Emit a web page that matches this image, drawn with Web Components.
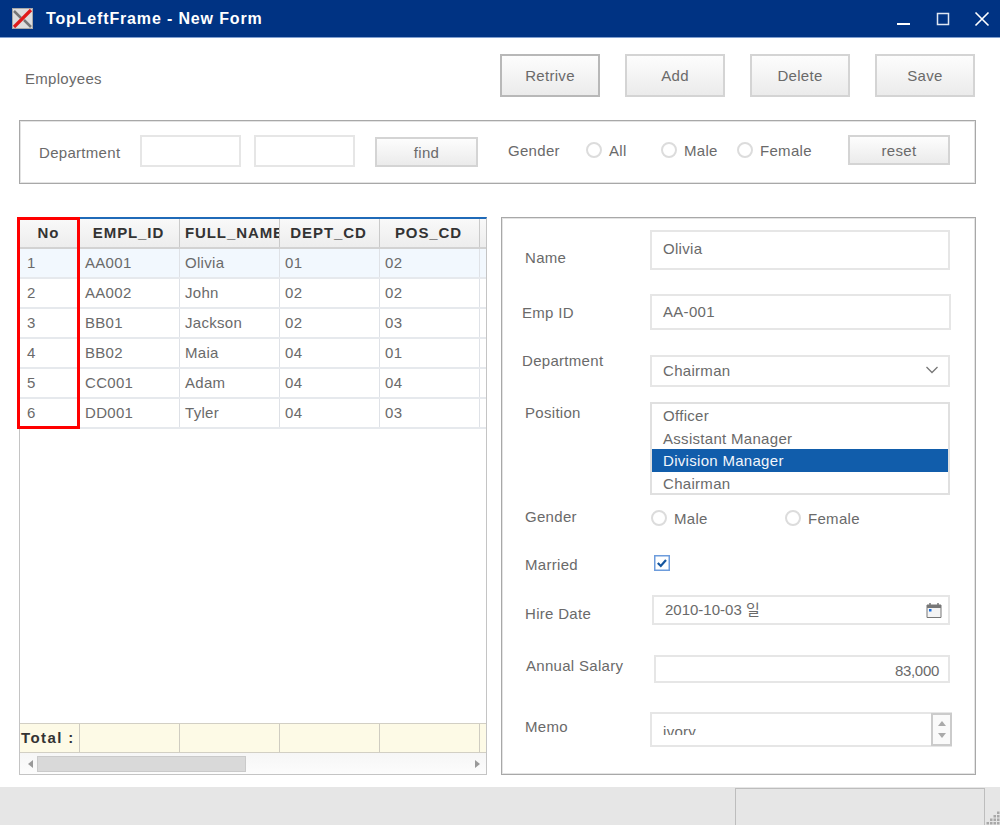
<!DOCTYPE html>
<html lang="en">
<head>
<meta charset="utf-8">
<title>TopLeftFrame - New Form</title>
<style>
  html, body { margin: 0; height: 825px; overflow: hidden; background: #fff; }
  body { font: 15px/1 "Liberation Sans", "Noto Sans CJK KR", sans-serif; letter-spacing: .3px; color: #6a6a6a; }
</style>
</head>
<body>
<app-frame></app-frame>

<script>
/**
 * Title bar with the window icon and the three window buttons
 */
class WinTitlebar extends HTMLElement {
  constructor() {
    super();
    this.attachShadow({ mode: "open" }).innerHTML = `
<style>
  :host { display: flex; align-items: center; height: 37px; background: #003383; border-bottom: 1px solid #7f9fd0; color: #fff; }
  .logo { margin-left: 12px; }
  .title { margin-left: 13px; font-size: 16px; font-weight: bold; letter-spacing: .85px; flex: 1; padding-top: 1px; }
  svg.btn { margin-left: 23px; }
  svg.btn:last-child { margin-right: 10px; }
</style>
<svg class="logo" width="21" height="21" viewBox="0 0 21 21">
  <rect x=".5" y=".5" width="20" height="20" fill="#dedede" stroke="#a8a8a8"/>
  <path d="M2 3l7 7M12 12l7 7" stroke="#767676" stroke-width="2.500"/>
  <path d="M2 19L19 2" stroke="#e01b1b" stroke-width="3.200"/>
</svg>
<span class="title"><slot></slot></span>
<svg class="btn" width="16" height="16" viewBox="0 0 16 16"><path d="M1 13h13" stroke="#fff" stroke-width="2"/></svg>
<svg class="btn" width="16" height="16" viewBox="0 0 16 16"><rect x="2.500" y="2.500" width="11" height="11" fill="none" stroke="#dfe6f2" stroke-width="1.500"/></svg>
<svg class="btn" width="16" height="16" viewBox="0 0 16 16"><path d="M1.500 1.500l13 13M14.500 1.500l-13 13" stroke="#fff" stroke-width="1.600"/></svg>`;
  }
}

/**
 * Grey gradient push button. Size comes from the width and height attributes
 */
class WinButton extends HTMLElement {
  constructor() {
    super();
    this.attachShadow({ mode: "open" }).innerHTML = `
<style>
  :host { display: flex; align-items: center; justify-content: center; box-sizing: border-box; flex: none;
    border: 2px solid #d4d4d4; background: linear-gradient(#fdfdfd, #ebebeb); }
  :host([dark]) { border-color: #b8b8b8; }
</style>
<slot></slot>`;
  }

  connectedCallback() {
    this.style.width = this.getAttribute("width") + "px";
    this.style.height = this.getAttribute("height") + "px";
  }
}

/**
 * Bordered box for a single value
 */
class TextField extends HTMLElement {
  constructor() {
    super();
    this.attachShadow({ mode: "open" }).innerHTML = `
<style>
  :host { display: flex; align-items: center; box-sizing: border-box; flex: none; padding: 0 11px; border: 2px solid #e6e6e6; background: #fff; }
  :host([right]) { justify-content: flex-end; }
  .value { flex: 1; white-space: nowrap; }
  :host([right]) .value { text-align: right; }
</style>
<span class="value"><slot></slot></span>
<slot name="end"></slot>`;
  }
}

/**
 * Radio button with its label
 */
class RadioOption extends HTMLElement {
  constructor() {
    super();
    this.attachShadow({ mode: "open" }).innerHTML = `
<style>
  :host { display: flex; align-items: center; gap: 7px; flex: none; }
  i { display: block; box-sizing: border-box; width: 16px; height: 16px; border: 2px solid #dcdcdc; border-radius: 50%; background: #fff; }
</style>
<i></i><slot></slot>`;
  }
}

/**
 * Search bar above the grid
 */
class FilterPanel extends HTMLElement {
  constructor() {
    super();
    this.attachShadow({ mode: "open" }).innerHTML = `
<style>
  :host { display: flex; align-items: center; box-sizing: border-box; height: 64px; margin: 0 24px 0 19px; padding-left: 1px;
    border: 1px solid #a8a8a8; box-shadow: inset 0 0 0 1px #e4e4e4; }
  .dept { margin-left: 18px; width: 101px; }
  text-field { width: 101px; height: 32px; margin-bottom: 2px; }
  .gender { margin-left: 30px; padding-bottom: 4px; width: 78px; }
  radio-option { padding-bottom: 4px; }
</style>
<span class="dept">Department</span>
<text-field></text-field>
<text-field style="margin-left:13px"></text-field>
<win-button width="103" height="30" style="margin-left:20px">find</win-button>
<span class="gender">Gender</span>
<radio-option style="width:75px">All</radio-option>
<radio-option style="width:76px">Male</radio-option>
<radio-option style="width:111px">Female</radio-option>
<win-button width="102" height="30" style="margin-bottom:4px">reset</win-button>`;
  }
}

const GRID_COLUMNS = ["No", "EMPL_ID", "FULL_NAME", "DEPT_CD", "POS_CD", ""];

const GRID_ROWS = [
  ["1", "AA001", "Olivia", "01", "02", ""],
  ["2", "AA002", "John", "02", "02", ""],
  ["3", "BB01", "Jackson", "02", "03", ""],
  ["4", "BB02", "Maia", "04", "01", ""],
  ["5", "CC001", "Adam", "04", "04", ""],
  ["6", "DD001", "Tyler", "04", "03", ""],
];

/**
 * Employee table with a summary row and a horizontal scrollbar
 */
class DataGrid extends HTMLElement {
  constructor() {
    super();
    this.attachShadow({ mode: "open" }).innerHTML = `
<style>
  :host { display: flex; flex-direction: column; position: relative; box-sizing: border-box; width: 468px; height: 558px;
    border: 1px solid #c4c4c4; border-top: 2px solid #1f6ab8; }
  .line { display: grid; grid-template-columns: 60px 100px 100px 100px 100px 1fr; height: 30px; box-sizing: border-box; flex: none; }
  .cell { box-sizing: border-box; padding-left: 5px; line-height: 28px; white-space: nowrap; overflow: hidden; border-right: 1px solid #dfe2e7; }
  .cell:last-child { border-right: 0; }
  .head { background: linear-gradient(#f9f9f9, #ededed); border-bottom: 2px solid #d2d2d2; color: #333; font-weight: bold; letter-spacing: .9px; }
  .head .cell { text-align: center; padding: 0 2px 0 0; border-right-color: #cacaca; line-height: 27px; }
  .head .cell:nth-child(3) { text-align: left; padding: 0 0 0 5px; }
  .row { border-bottom: 2px solid #e6e9ed; }
  .row:nth-child(3) { background: #f2f8fe; }
  .row .cell:first-child { padding-left: 7px; }
  .fill { flex: 1; }
  .total { background: #fdfae6; border: 1px solid #d2cfc4; border-width: 1px 0; color: #333; font-weight: bold; }
  .total .cell { border-right-color: #cfccc1; padding-left: 1px; letter-spacing: 1.400px; }
  .scroll { display: flex; align-items: center; flex: none; height: 21px; background: linear-gradient(#f6f6f6, #fcfcfc); }
  .thumb { box-sizing: border-box; width: 209px; height: 16px; margin-left: 3px; background: #d9d9d9; border: 1px solid #cacaca; }
  .scroll svg:first-child { margin-left: 8px; }
  .scroll svg:last-child { margin-left: auto; margin-right: 6px; }
  .mark { position: absolute; left: -3px; top: -2px; width: 63px; height: 212px; box-sizing: border-box; border: 3px solid #f00; }
</style>
<div class="line head"></div>
<div class="fill"></div>
<div class="line total"></div>
<div class="scroll">
  <svg width="6" height="8" viewBox="0 0 6 8"><path d="M5 0v8L0 4z" fill="#999"/></svg>
  <div class="thumb"></div>
  <svg width="6" height="8" viewBox="0 0 6 8"><path d="M1 0v8l5-4z" fill="#999"/></svg>
</div>
<div class="mark"></div>`;
  }

  connectedCallback() {
    const root = this.shadowRoot;
    const fillCells = (line, values) => {
      values.forEach((value) => {
        const cell = document.createElement("div");
        cell.className = "cell";
        cell.textContent = value;
        line.appendChild(cell);
      });
    };

    fillCells(root.querySelector(".head"), GRID_COLUMNS);
    fillCells(root.querySelector(".total"), ["Total :", "", "", "", "", ""]);

    let previous = root.querySelector(".head");
    GRID_ROWS.forEach((values) => {
      const line = document.createElement("div");
      line.className = "line row";
      fillCells(line, values);
      previous.after(line);
      previous = line;
    });
  }
}

/**
 * One row of the detail form: label on the left, field in the slot
 */
class FormRow extends HTMLElement {
  constructor() {
    super();
    this.attachShadow({ mode: "open" }).innerHTML = `
<style>
  :host { display: flex; align-items: flex-start; flex: none; }
  .label { flex: none; white-space: nowrap; }
</style>
<span class="label"></span><slot></slot>`;
  }

  connectedCallback() {
    const label = this.shadowRoot.querySelector(".label");
    label.textContent = this.getAttribute("label");
    label.style.margin = `${this.getAttribute("label-top")}px 0 0 ${this.getAttribute("label-left")}px`;
    label.style.width = `${this.getAttribute("label-width")}px`;
    this.style.height = `${this.getAttribute("height")}px`;
  }
}

/**
 * List box with a selected entry
 */
class PositionList extends HTMLElement {
  constructor() {
    super();
    this.attachShadow({ mode: "open" }).innerHTML = `
<style>
  :host { display: block; box-sizing: border-box; width: 300px; height: 93px; border: 2px solid #e0e0e0; }
  div { height: 22.500px; line-height: 24.500px; padding-left: 11px; white-space: nowrap; }
  .selected { background: #115dab; color: #f2f6fb; }
</style>
<div>Officer</div>
<div>Assistant Manager</div>
<div class="selected">Division Manager</div>
<div>Chairman</div>`;
  }
}

/**
 * Multi line memo box, showing only the part of the text that fits
 */
class MemoBox extends HTMLElement {
  constructor() {
    super();
    this.attachShadow({ mode: "open" }).innerHTML = `
<style>
  :host { display: flex; box-sizing: border-box; width: 302px; height: 35px; border: 2px solid #e6e6e6; }
  .text { flex: 1; margin: 9px 0 0 11px; height: 12px; line-height: 18px; overflow: hidden; }
  .spin { display: flex; flex-direction: column; align-items: center; justify-content: center; gap: 7px; box-sizing: border-box; width: 21px; margin: -1px -2px -1px 0; border: 2px solid #cbcbcb; background: #fafafa; }
</style>
<div class="text"><slot></slot></div>
<div class="spin">
  <svg width="8" height="5" viewBox="0 0 8 5"><path d="M0 5h8L4 0z" fill="#aaa"/></svg>
  <svg width="8" height="5" viewBox="0 0 8 5"><path d="M0 0h8L4 5z" fill="#aaa"/></svg>
</div>`;
  }
}

/**
 * Detail form on the right side
 */
class DetailForm extends HTMLElement {
  constructor() {
    super();
    this.attachShadow({ mode: "open" }).innerHTML = `
<style>
  :host { display: flex; flex-direction: column; box-sizing: border-box; width: 475px; height: 558px; padding: 12px 0 0 1px;
    border: 1px solid #a8a8a8; box-shadow: inset 0 0 0 1px #e4e4e4; }
  text-field { width: 300px; }
  .radios { display: flex; margin-top: 4px; }
</style>
<form-row label="Name" label-left="22" label-width="125" label-top="20" height="64"><text-field style="height:40px;padding-bottom:4px">Olivia</text-field></form-row>
<form-row label="Emp ID" label-left="19" label-width="128" label-top="11" height="61"><text-field style="width:301px;height:36px;padding-bottom:2px">AA-001</text-field></form-row>
<form-row label="Department" label-left="19" label-width="128" label-top="-2" height="47"><text-field style="height:32px;padding-bottom:2px">Chairman
  <svg slot="end" width="14" height="8" viewBox="0 0 14 8" style="margin-right:-2px"><path d="M1.500 1l5.500 5.500 5.500-5.500" fill="none" stroke="#777" stroke-width="1.300"/></svg></text-field></form-row>
<form-row label="Position" label-left="22" label-width="125" label-top="3" height="104"><position-list></position-list></form-row>
<form-row label="Gender" label-left="22" label-width="126" label-top="3" height="51"><div class="radios"><radio-option style="width:134px">Male</radio-option><radio-option>Female</radio-option></div></form-row>
<form-row label="Married" label-left="22" label-width="129" label-top="0" height="38">
  <svg style="margin-top:-2px" width="16" height="16" viewBox="0 0 16 16"><rect x=".75" y=".75" width="14.500" height="14.500" fill="#fff" stroke="#6d9cdc" stroke-width="1.500"/><path d="M3.800 8l3 3 5.200-6" fill="none" stroke="#15569f" stroke-width="2.200"/></svg>
</form-row>
<form-row label="Hire Date" label-left="22" label-width="127" label-top="11" height="60"><text-field style="width:298px;height:30px;padding:0 6px 0 11px"><span style="position:relative;top:-1px;letter-spacing:0">2010-10-03 일</span>
  <svg slot="end" width="16" height="16" viewBox="0 0 16 16"><path d="M1 3h14v12.500H1z" fill="#f4f4f4" stroke="#777"/><path d="M1 3h14v3H1z" fill="#777"/><path d="M4 1v2M12 1v2" stroke="#777" stroke-width="1.500"/><rect x="3" y="7" width="2.500" height="2.500" fill="#1a6fe0"/></svg></text-field></form-row>
<form-row label="Annual Salary" label-left="23" label-width="128" label-top="3" height="57"><text-field right style="width:296px;height:28px;padding:0 9px 0 0"><span style="position:relative;top:1px;letter-spacing:-.3px">83,000</span></text-field></form-row>
<form-row label="Memo" label-left="22" label-width="125" label-top="7" height="40"><memo-box>ivory</memo-box></form-row>`;
  }
}

/**
 * Bottom status bar with a sunken pane and a resize grip
 */
class StatusBar extends HTMLElement {
  constructor() {
    super();
    this.attachShadow({ mode: "open" }).innerHTML = `
<style>
  :host { display: flex; justify-content: flex-end; align-items: flex-end; height: 38px; background: #e6e6e6; }
  .pane { box-sizing: border-box; width: 250px; height: 37px; margin-right: 15px; border: 1px solid #bdbdbd; border-bottom: 0; }
  svg { position: absolute; right: 0; bottom: 0; }
</style>
<div class="pane"></div>
<svg width="14" height="14" viewBox="0 0 14 14" fill="#a8a8a8">
  <rect x="11" y=".5" width="2.500" height="2.500"/>
  <rect x="7.500" y="4" width="2.500" height="2.500"/><rect x="11" y="4" width="2.500" height="2.500"/>
  <rect x="4" y="7.500" width="2.500" height="2.500"/><rect x="7.500" y="7.500" width="2.500" height="2.500"/><rect x="11" y="7.500" width="2.500" height="2.500"/>
  <rect x=".5" y="11" width="2.500" height="2.500"/><rect x="4" y="11" width="2.500" height="2.500"/><rect x="7.500" y="11" width="2.500" height="2.500"/><rect x="11" y="11" width="2.500" height="2.500"/>
</svg>`;
  }
}

/**
 * The whole window
 */
class AppFrame extends HTMLElement {
  constructor() {
    super();
    this.attachShadow({ mode: "open" }).innerHTML = `
<style>
  :host { display: block; height: 825px; }
  .toolbar { display: flex; gap: 25px; box-sizing: border-box; height: 82px; padding: 16px 25px 0; }
  .name { flex: 1; padding-top: 17px; }
  .main { display: flex; gap: 14px; margin: 33px 0 12px 19px; }
</style>
<win-titlebar>TopLeftFrame - New Form</win-titlebar>
<div class="toolbar">
  <span class="name">Employees</span>
  <win-button dark width="100" height="43">Retrive</win-button>
  <win-button width="100" height="43">Add</win-button>
  <win-button width="100" height="43">Delete</win-button>
  <win-button width="100" height="43">Save</win-button>
</div>
<filter-panel></filter-panel>
<div class="main">
  <data-grid></data-grid>
  <detail-form></detail-form>
</div>
<status-bar></status-bar>`;
  }
}

window.customElements.define("win-titlebar", WinTitlebar);
window.customElements.define("win-button", WinButton);
window.customElements.define("text-field", TextField);
window.customElements.define("radio-option", RadioOption);
window.customElements.define("filter-panel", FilterPanel);
window.customElements.define("data-grid", DataGrid);
window.customElements.define("form-row", FormRow);
window.customElements.define("position-list", PositionList);
window.customElements.define("memo-box", MemoBox);
window.customElements.define("detail-form", DetailForm);
window.customElements.define("status-bar", StatusBar);
window.customElements.define("app-frame", AppFrame);
</script>
</body>
</html>
